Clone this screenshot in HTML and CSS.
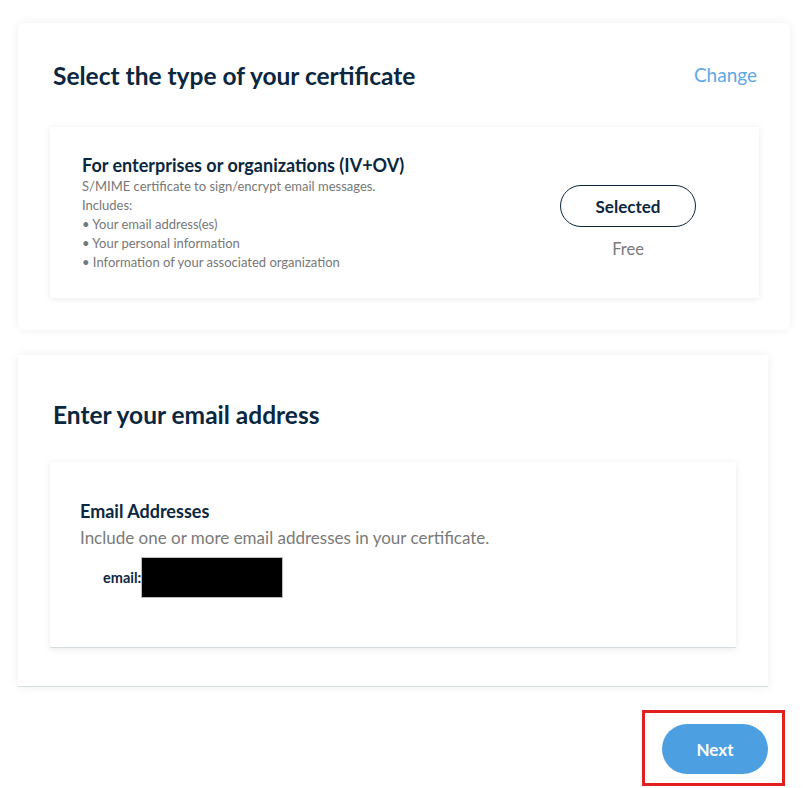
FILE: index.html
```html
<!DOCTYPE html>
<html lang="en">
<head>
<meta charset="utf-8">
<title>Certificate</title>
<link rel="stylesheet" href="styles.css">
</head>
<body>
<div class="page">
  <section class="card card-type">
    <div class="card-head">
      <h2 class="card-title">Select the type of your certificate</h2>
      <a class="change-link" href="#">Change</a>
    </div>
    <div class="panel panel-type">
      <div class="type-info">
        <h3 class="type-title">For enterprises or organizations (IV+OV)</h3>
        <p class="type-line">S/MIME certificate to sign/encrypt email messages.</p>
        <p class="type-line">Includes:</p>
        <p class="type-line">• Your email address(es)</p>
        <p class="type-line">• Your personal information</p>
        <p class="type-line">• Information of your associated organization</p>
      </div>
      <div class="type-action">
        <button class="btn-selected" type="button">Selected</button>
        <div class="price">Free</div>
      </div>
    </div>
  </section>

  <section class="card card-email">
    <div class="card-head">
      <h2 class="card-title">Enter your email address</h2>
    </div>
    <div class="panel panel-email">
      <h3 class="email-title">Email Addresses</h3>
      <p class="email-desc">Include one or more email addresses in your certificate.</p>
      <div class="email-row">
        <span class="email-label">email:</span>
        <span class="email-redact"></span>
      </div>
    </div>
  </section>

  <div class="footer">
    <div class="next-wrap">
      <button class="btn-next" type="button">Next</button>
      <div class="highlight"></div>
    </div>
  </div>
</div>
</body>
</html>
```

FILE: styles.css
```css
* { box-sizing: border-box; }
html, body { margin: 0; padding: 0; background: #ffffff; }
body {
  font-family: Lato, "Open Sans", "Liberation Sans", sans-serif;
  color: #0b2740;
}
.page {
  padding: 23px 0 13px 18px;
  width: 807px;
}
.card {
  background: #fff;
  box-shadow: 0 0 10px rgba(0, 0, 0, 0.07);
}
.card-type {
  width: 772px;
  border-radius: 7px;
  padding: 28px 31px 32px 32px;
}
.card-email {
  width: 750px;
  margin-top: 25px;
  padding: 35px 32px 38px 32px;
  border-bottom: 1px solid #d6dee2;
}
.card-head {
  display: flex;
  align-items: center;
  justify-content: space-between;
  height: 48px;
  padding: 0 2px 0 3px;
}
.card-title {
  margin: 0;
  font-size: 24.5px;
  font-weight: 700;
  color: #0b2740;
}
.change-link {
  font-size: 19px;
  color: #5ea9e5;
  text-decoration: none;
  margin-top: -2px;
}
.panel {
  background: #fff;
  box-shadow: 0 1px 7px rgba(0, 0, 0, 0.09);
}
.panel-type {
  margin-top: 28px;
  display: flex;
  align-items: flex-start;
  justify-content: space-between;
  padding: 27px 63px 26px 32px;
}
.type-title {
  margin: 0;
  font-size: 18px;
  line-height: 23px;
  font-weight: 700;
  color: #0b2740;
}
.type-line {
  margin: 0;
  font-size: 13px;
  line-height: 19px;
  color: #777;
}
.type-action {
  display: flex;
  flex-direction: column;
  align-items: center;
  gap: 12px;
  margin-top: 31px;
}
.btn-selected {
  width: 136px;
  height: 42px;
  border: 1px solid #0b2740;
  border-radius: 21px;
  background: #fff;
  font-family: inherit;
  font-size: 17px;
  font-weight: 700;
  color: #0b2740;
}
.price {
  font-size: 16.5px;
  line-height: 20px;
  color: #7a7a7a;
}
.panel-email {
  margin-top: 24px;
  padding: 38px 30px 49px 30px;
  border-bottom: 1px solid #d6dee2;
}
.email-title {
  margin: 0;
  font-size: 18px;
  line-height: 22px;
  font-weight: 700;
  color: #0b2740;
}
.email-desc {
  margin: 5px 0 0 0;
  font-size: 17px;
  line-height: 22px;
  color: #7a7a7a;
}
.email-row {
  display: flex;
  align-items: center;
  margin-top: 8px;
  padding-left: 23px;
}
.email-label {
  font-size: 14.5px;
  font-weight: 700;
  color: #0b2740;
}
.email-redact {
  display: block;
  width: 142px;
  height: 41px;
  background: #000;
  border: 1px solid #bbb;
}
.footer {
  width: 750px;
  display: flex;
  justify-content: flex-end;
  align-items: flex-start;
  margin-top: 37px;
}
.next-wrap {
  position: relative;
  width: 106px;
  height: 50px;
}
.btn-next {
  display: block;
  width: 106px;
  height: 50px;
  border: none;
  border-radius: 25px;
  background: #4c9fe0;
  color: #fff;
  font-family: inherit;
  font-size: 17px;
  font-weight: 700;
}
.highlight {
  position: absolute;
  left: -20px;
  top: -14px;
  width: 143px;
  height: 76px;
  border: 3px solid #e3201f;
  pointer-events: none;
}
```
